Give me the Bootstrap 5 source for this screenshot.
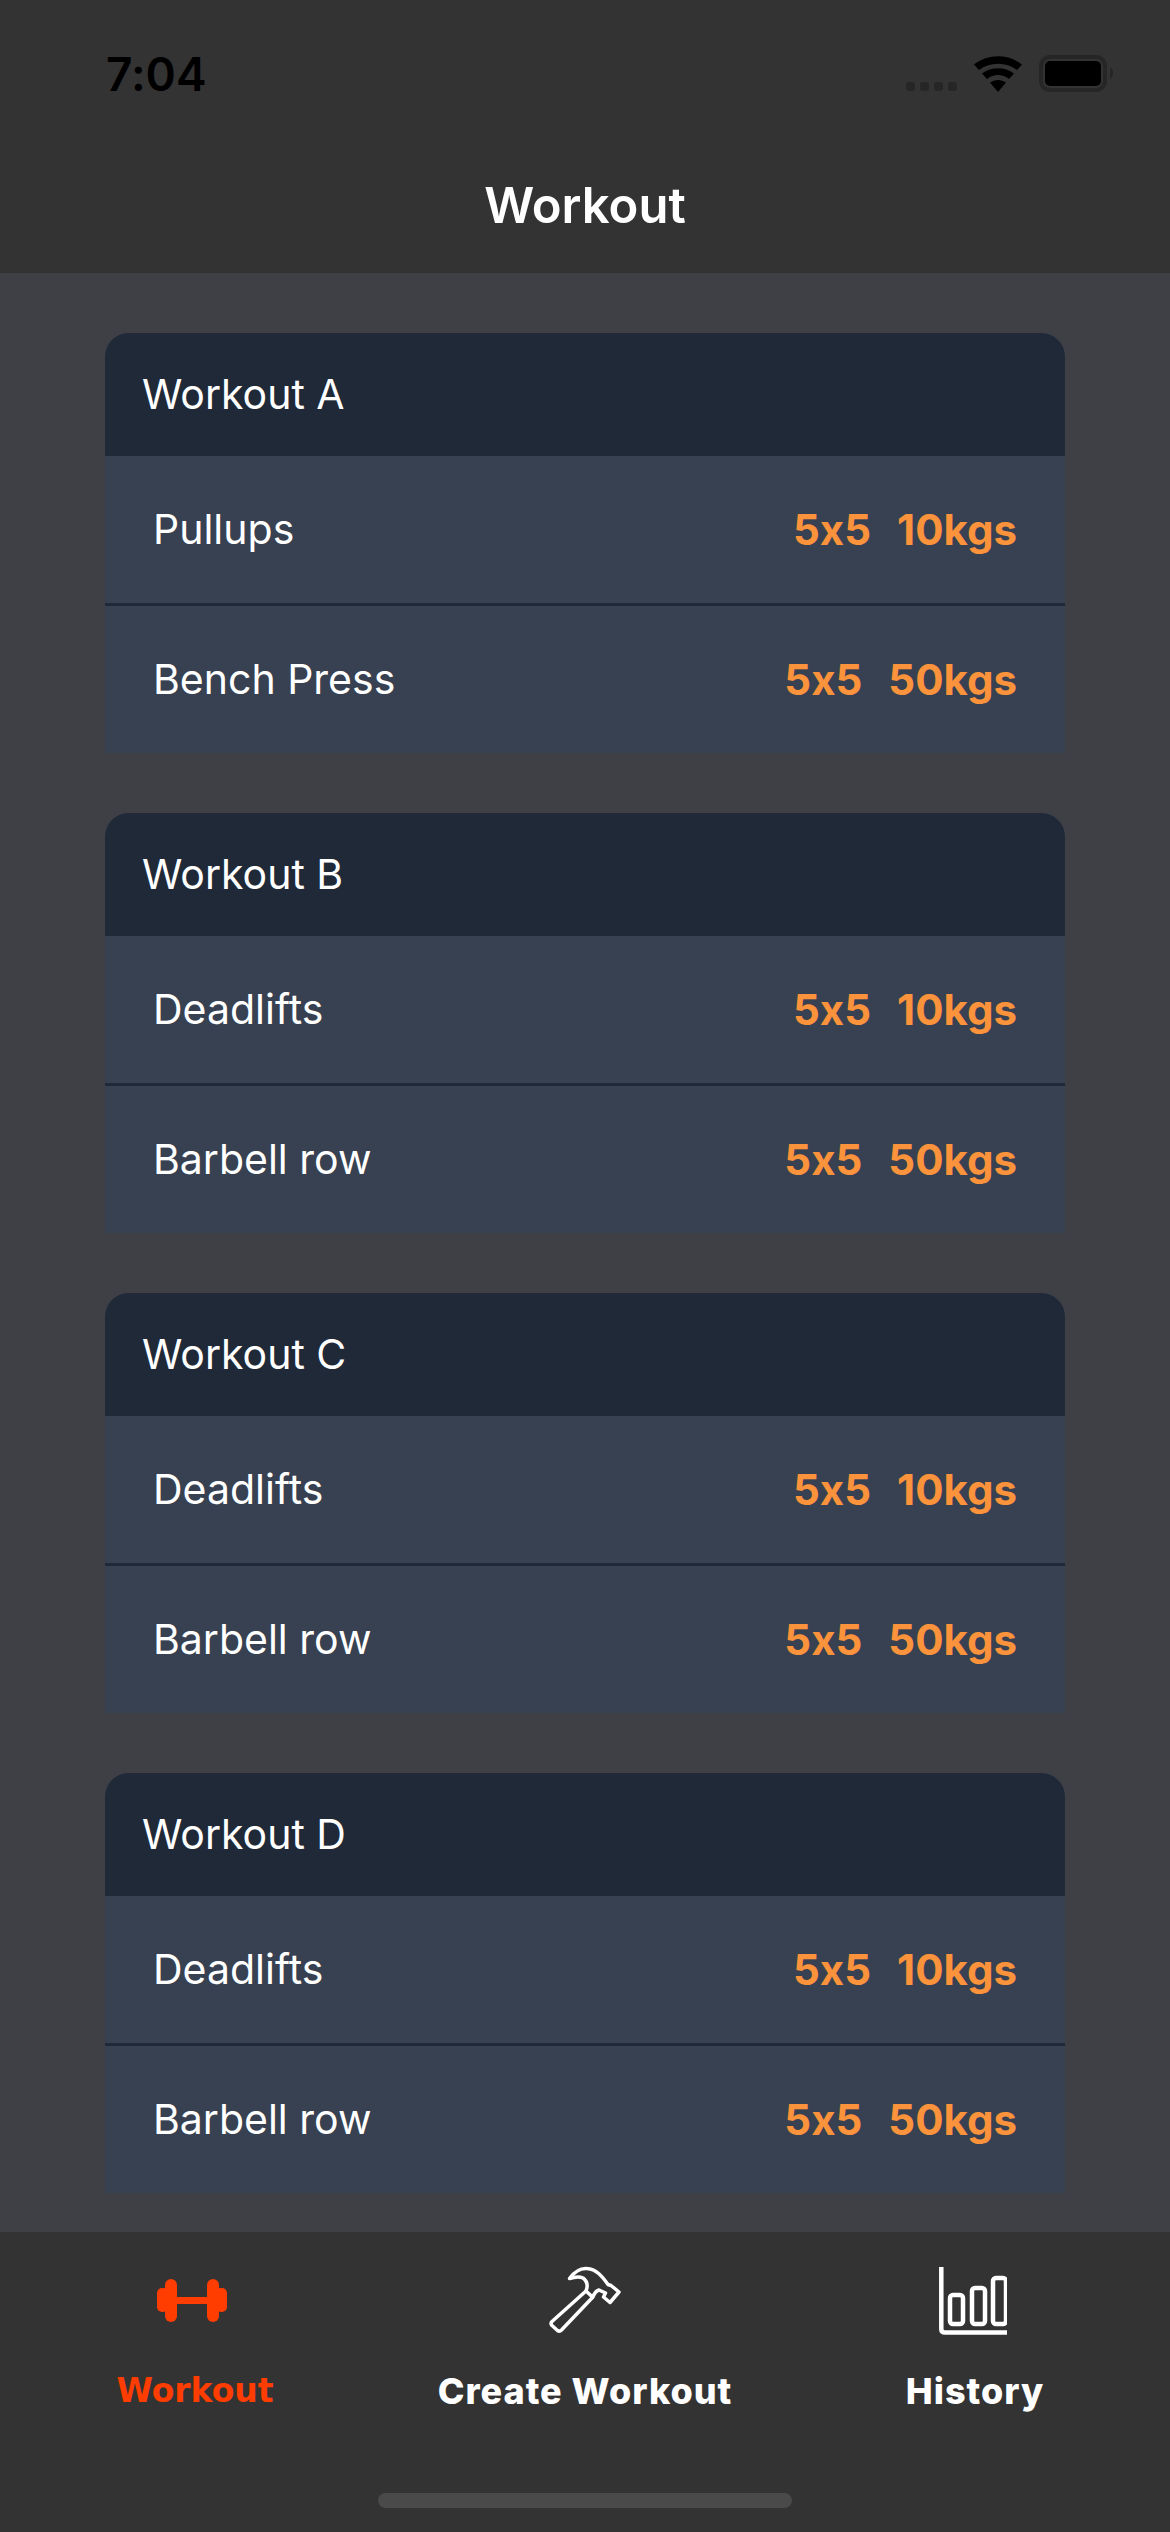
<!DOCTYPE html>
<html lang="en">
<head>
<meta charset="utf-8">
<title>Workout</title>
<link href="https://cdn.jsdelivr.net/npm/bootstrap@5.3.0/dist/css/bootstrap.min.css" rel="stylesheet">
<style>
body { font-family: Inter, "Liberation Sans", sans-serif; font-feature-settings: "calt" 0; background: #3f3f46; color: #fff; width: 1170px; height: 2532px; overflow: hidden; }
.app-top { background: #333; height: 273px; flex: none; }
.status-line { height: 181px; padding: 0 55px 0 106px; }
.clock { color: #000; font-size: 46px; font-weight: 600; line-height: 1; margin-top: 51px; }
.status-icons { margin-top: 55px; gap: 17px; }
.app-title { font-size: 49px; font-weight: 600; line-height: 1; margin: 0; }
.app-main { padding: 60px 105px 39px; gap: 60px; }
.plan { background: #374151; border: 0; border-radius: 24px 24px 0 0; height: 420px; overflow: hidden; color: #fff; }
.plan .card-header { background: #1f2937; border: 0; border-radius: 0; height: 123px; padding: 0 0 0 37px; font-size: 41px; line-height: 123px; color: #fff; }
.plan .list-group { --bs-list-group-bg: #374151; --bs-list-group-color: #fff; --bs-list-group-border-width: 0; border-radius: 0; }
.plan .list-group-item { height: 147px; padding: 0 48px 0 48px; font-size: 41px; }
.plan .list-group-item + .list-group-item { border-top: 3px solid #1f2937; height: 150px; }
.dose { color: #fb923c; font-weight: 700; font-size: 42px; gap: 26px; }
.tabbar { background: #333; height: 300px; flex: none; position: relative; }
.tab-cell { height: 300px; padding-top: 33px; }
.tab-glyph { height: 70px; }
.tab-name { font-size: 36px; letter-spacing: 1px; font-weight: 800; line-height: 1; margin-top: 38px; white-space: nowrap; }
.tab-name-on { color: #ff3d00; font-family: "DejaVu Sans", sans-serif; font-weight: 700; font-size: 33px; letter-spacing: 0; margin-top: 39px; }
.dumbbell { margin-right: 6px; }
.chart-glyph { margin-right: 4px; }
.home-bar { position: absolute; left: 378px; top: 261px; width: 414px; height: 15px; border-radius: 8px; background: #4a4a4a; }
</style>
</head>
<body class="d-flex flex-column">
<header class="app-top">
  <div class="status-line d-flex justify-content-between align-items-start">
    <div class="clock">7:04</div>
    <div class="status-icons d-flex align-items-start">
      <svg width="116" height="40" viewBox="0 0 116 40" class="d-block">
        <g fill="#262626"><rect x="0" y="27" width="9" height="9" rx="3"/><rect x="14" y="27" width="9" height="9" rx="3"/><rect x="28" y="27" width="9" height="9" rx="3"/><rect x="42" y="27" width="9" height="9" rx="3"/></g>
        <path fill="#000" d="M68 9.500C82 -1.500 102 -1.500 116 9.500L111 15C100 6.500 84 6.500 73 15Z M76 18.500C85 11.500 99 11.500 108 18.500L103 24C96.500 18.500 87.500 18.500 81 24Z M84 27.500C89 24 95 24 100 27.500L92 37Z"/>
      </svg>
      <svg width="76" height="40" viewBox="0 0 76 40" class="d-block">
        <rect x="2" y="2" width="64" height="33" rx="9" fill="none" stroke="#262626" stroke-width="4"/>
        <rect x="6" y="6" width="56" height="25" rx="5" fill="#000"/>
        <path d="M71 12C75 14 75 22 71 24Z" fill="#262626"/>
      </svg>
    </div>
  </div>
  <h1 class="app-title text-center">Workout</h1>
</header>

<main class="app-main d-flex flex-column flex-grow-1">
  <section class="card plan">
    <div class="card-header">Workout A</div>
    <ul class="list-group list-group-flush">
      <li class="list-group-item d-flex justify-content-between align-items-center"><span>Pullups</span><span class="dose d-flex"><span>5x5</span><span>10kgs</span></span></li>
      <li class="list-group-item d-flex justify-content-between align-items-center"><span>Bench Press</span><span class="dose d-flex"><span>5x5</span><span>50kgs</span></span></li>
    </ul>
  </section>
  <section class="card plan">
    <div class="card-header">Workout B</div>
    <ul class="list-group list-group-flush">
      <li class="list-group-item d-flex justify-content-between align-items-center"><span>Deadlifts</span><span class="dose d-flex"><span>5x5</span><span>10kgs</span></span></li>
      <li class="list-group-item d-flex justify-content-between align-items-center"><span>Barbell row</span><span class="dose d-flex"><span>5x5</span><span>50kgs</span></span></li>
    </ul>
  </section>
  <section class="card plan">
    <div class="card-header">Workout C</div>
    <ul class="list-group list-group-flush">
      <li class="list-group-item d-flex justify-content-between align-items-center"><span>Deadlifts</span><span class="dose d-flex"><span>5x5</span><span>10kgs</span></span></li>
      <li class="list-group-item d-flex justify-content-between align-items-center"><span>Barbell row</span><span class="dose d-flex"><span>5x5</span><span>50kgs</span></span></li>
    </ul>
  </section>
  <section class="card plan">
    <div class="card-header">Workout D</div>
    <ul class="list-group list-group-flush">
      <li class="list-group-item d-flex justify-content-between align-items-center"><span>Deadlifts</span><span class="dose d-flex"><span>5x5</span><span>10kgs</span></span></li>
      <li class="list-group-item d-flex justify-content-between align-items-center"><span>Barbell row</span><span class="dose d-flex"><span>5x5</span><span>50kgs</span></span></li>
    </ul>
  </section>
</main>

<nav class="tabbar">
  <div class="row g-0">
    <div class="col-4 tab-cell d-flex flex-column align-items-center">
      <div class="tab-glyph d-flex align-items-center">
        <svg width="70" height="43" viewBox="0 0 70 43" class="d-block dumbbell">
          <g fill="#ff3d00">
            <rect x="0" y="9" width="11" height="24" rx="5"/><rect x="59" y="9" width="11" height="24" rx="5"/>
            <rect x="8" y="0" width="12" height="43" rx="6"/><rect x="50" y="0" width="12" height="43" rx="6"/>
            <rect x="18" y="18" width="34" height="7"/>
          </g>
        </svg>
      </div>
      <div class="tab-name tab-name-on">Workout</div>
    </div>
    <div class="col-4 tab-cell d-flex flex-column align-items-center">
      <div class="tab-glyph d-flex align-items-center">
        <svg width="74" height="68" viewBox="0 0 74 68" class="d-block">
          <g fill="none" stroke="#fff" stroke-width="3.500" stroke-linejoin="round">
            <path d="M38 25L4 55.500Q2 57.500 4 59.500L9.500 64.500Q11.500 66 13.500 64L44.700 31.300"/>
            <path d="M21.500 12.500C27 5 33 2 39 2.500C48 3 54 10 60 18.500L63 19.500L71 26L62 36.500L55.500 31L57.500 27L51 24C48 25 46 28 44.700 31.300L38 25C40 20 39 15 35 12C31 10 26 11 21.500 12.500Z"/>
          </g>
        </svg>
      </div>
      <div class="tab-name">Create Workout</div>
    </div>
    <div class="col-4 tab-cell d-flex flex-column align-items-center">
      <div class="tab-glyph d-flex align-items-center">
        <svg width="68" height="70" viewBox="0 0 68 70" class="d-block chart-glyph">
          <g fill="none" stroke="#fff" stroke-width="4.500">
            <path d="M2.300 2V64Q2.300 67.500 6 67.500H68"/>
            <rect x="11" y="30" width="13" height="29" rx="3"/>
            <rect x="33" y="23" width="13" height="36" rx="3"/>
            <rect x="54" y="13" width="13" height="46" rx="3"/>
          </g>
        </svg>
      </div>
      <div class="tab-name">History</div>
    </div>
  </div>
  <div class="home-bar"></div>
</nav>
<script src="https://cdn.jsdelivr.net/npm/bootstrap@5.3.0/dist/js/bootstrap.bundle.min.js"></script>
</body>
</html>
